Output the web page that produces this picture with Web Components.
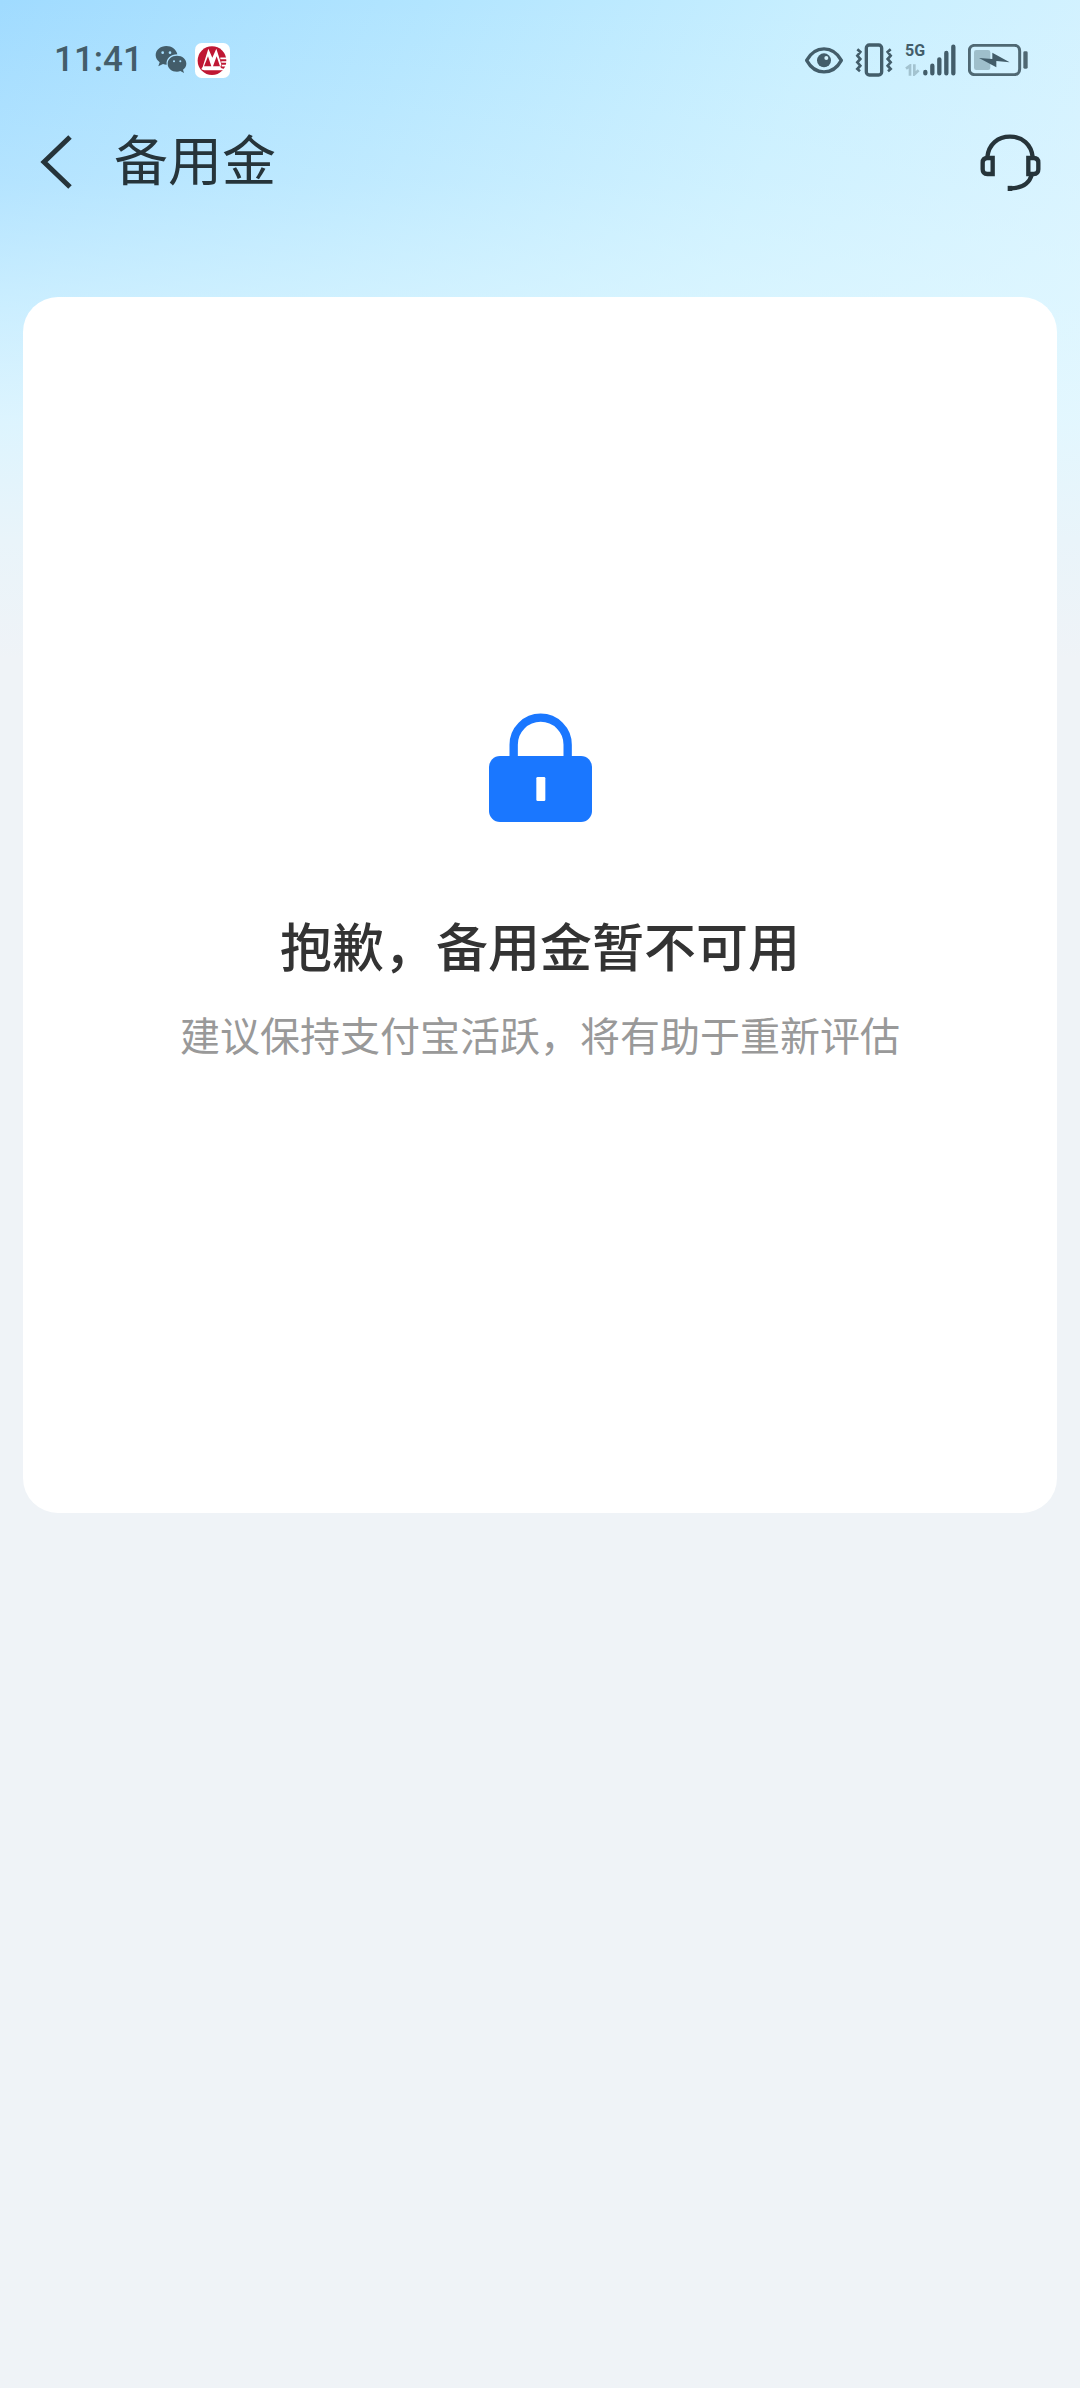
<!DOCTYPE html>
<html lang="zh-CN">
<head>
<meta charset="utf-8">
<meta name="viewport" content="width=device-width, initial-scale=1">
<title>备用金</title>
<style>
  html { background: #eff3f7; }
  body { margin: 0; font-family: "Noto Sans CJK SC", "Noto Sans", sans-serif; color: #333; }
</style>
</head>
<body>
<reserve-page>
  <status-bar slot="top" time="11:41"></status-bar>
  <nav-bar slot="top">备用金</nav-bar>
  <status-card>
    <lock-icon slot="icon"></lock-icon>
    <span slot="title">抱歉，备用金暂不可用</span>
    <span slot="text">建议保持支付宝活跃，将有助于重新评估</span>
  </status-card>
</reserve-page>

<script>
function define(name, html) {
  const template = document.createElement('template');
  template.innerHTML = html;
  customElements.define(name, class extends HTMLElement {
    constructor() {
      super();
      this.attachShadow({ mode: 'open' }).append(template.content.cloneNode(true));
    }
    connectedCallback() {
      const time = this.shadowRoot.querySelector('time');
      if (time) time.textContent = this.getAttribute('time');
    }
  });
}

define('reserve-page', `
<style>
  :host {
    display: block; box-sizing: border-box; min-height: 100vh; padding-bottom: 48px;
    background:
      linear-gradient(180deg, rgba(230,248,255,0) 0, rgba(230,248,255,.25) 180px, rgba(226,248,255,.6) 300px, rgba(228,247,254,.88) 420px, rgba(233,244,250,1) 540px, #eff3f7 660px) no-repeat,
      linear-gradient(112deg, #a0dbff 0%, #b2e5ff 32%, #c8efff 62%, #dcf4ff 100%) 0 0 / 100% 640px no-repeat,
      #eff3f7;
  }
  main { padding: 93px 23px 0; }
</style>
<header><slot name="top"></slot></header>
<main><slot></slot></main>`);

define('status-bar', `
<style>
  :host { display: flex; align-items: center; justify-content: space-between; height: 120px; padding: 0 52px 0 54px; color: #435d6a; }
  div { display: flex; align-items: center; }
  svg { display: block; }
  time { font: 500 35px/40px Roboto, sans-serif; margin-right: 12px; }
  .left svg + svg { margin-left: 8px; }
  .right { gap: 12px; }
  .net { align-items: stretch; }
  .kind { flex-direction: column; align-items: flex-start; justify-content: space-between; width: 18px; height: 32px; }
  .kind span { font: 700 16px/14px Roboto, sans-serif; }
</style>
<div class="left">
  <time></time>
  <svg width="32" height="30" viewBox="0 0 96 90" fill="currentColor" aria-label="微信">
    <path d="M34 3C16 3 2 15 2 31c0 9 5 16 12 21l-4 12 14-7c4 1 7 2 11 2-3-17 12-31 32-31C64 13 50 3 34 3z"/>
    <path d="M66 32c-16 0-28 10-28 24s12 24 28 24c4 0 7-1 10-2l11 6-3-10c6-4 10-11 10-18 0-14-12-24-28-24z"/>
    <g fill="#a8e0ff"><circle cx="23" cy="23" r="4"/><circle cx="45" cy="23" r="4"/><circle cx="57" cy="49" r="3"/><circle cx="76" cy="49" r="3"/></g>
  </svg>
  <svg width="35" height="35" viewBox="0 0 105 105" aria-label="招商银行">
    <rect width="105" height="105" rx="20" fill="#fff"/>
    <circle cx="51" cy="53" r="43" fill="#bf1733"/>
    <path d="M23 72L40 17l12 27 12-27 15 47-3 8q4 7 15 4l2 6H28q-14-2-5-10z" fill="#fff"/>
    <path d="M27 70l12-30 10 30zM54 70l11-30 10 30z" fill="#bf1733"/>
    <path d="M76 46h27M79 57h24M80 68h19" stroke="#fff" stroke-width="5"/>
  </svg>
</div>
<div class="right">
  <svg width="38" height="27" viewBox="0 0 114 81" aria-label="护眼模式">
    <path d="M5 40C30-6 84-6 109 40 84 86 30 86 5 40z" fill="none" stroke="currentColor" stroke-width="10" stroke-linejoin="round"/>
    <circle cx="57" cy="40" r="21" fill="currentColor"/><circle cx="64" cy="33" r="6" fill="#d3f1fb"/>
  </svg>
  <svg width="38" height="34" viewBox="0 0 114 102" fill="none" stroke="currentColor" stroke-width="10" aria-label="振动">
    <rect x="34" y="6" width="46" height="90" rx="9"/>
    <path d="M7 19l9 8-9 11 9 10-9 10 9 10-9 10 8 7M107 19l-9 8 9 11-9 10 9 10-9 10 9 10-8 7" stroke-width="8"/>
  </svg>
  <div class="net">
    <div class="kind"><span>5G</span>
      <svg width="16" height="12" viewBox="0 0 48 36" fill="none" stroke="#a3c3d0" stroke-width="8"><path d="M3 14L15 5v30M28 1v30l13-12"/></svg>
    </div>
    <svg width="33" height="32" viewBox="0 0 99 96" stroke="currentColor" stroke-width="13" stroke-linecap="round" aria-label="信号">
      <path d="M7 84v4M28 65v23M49 46v42M70 27v61M91 8v80"/>
    </svg>
  </div>
  <svg width="60" height="32" viewBox="0 0 180 96" aria-label="正在充电">
    <rect x="4" y="4" width="151" height="88" rx="16" fill="none" stroke="#4f6873" stroke-width="9"/>
    <rect x="18" y="18" width="49" height="60" rx="7" fill="#9fbfcb"/>
    <path d="M33 42l40 3V26l52 29-40-4v19z" fill="currentColor"/>
    <rect x="166" y="22" width="13" height="52" rx="4" fill="#4f6873"/>
  </svg>
</div>`);

define('nav-bar', `
<style>
  :host { display: flex; align-items: center; height: 84px; padding: 0 38px; color: #26343a; }
  button { display: block; border: 0; padding: 0; background: none; color: inherit; }
  svg { display: block; }
  h1 { flex: 1; margin: 0 0 8px 42px; font-size: 54px; line-height: 76px; font-weight: 400; }
</style>
<button type="button" aria-label="返回">
  <svg width="34" height="54" viewBox="0 0 34 54" fill="none" stroke="currentColor" stroke-width="5"><path d="M32 2L6 27l26 25"/></svg>
</button>
<h1><slot></slot></h1>
<button type="button" aria-label="客服">
  <svg width="62" height="58" viewBox="62 66 186 174" fill="none" stroke="currentColor" stroke-width="13">
    <path d="M84 138C88 100 115 77 152 77s64 23 68 61M217 192c-8 28-34 40-66 40" />
    <path d="M145 233h14" stroke-width="17"/>
    <path d="M100 141v48H84q-14 0-14-14v-20q0-14 14-14zM207 141v48h16q14 0 14-14v-20q0-14-14-14z"/>
  </svg>
</button>`);

define('status-card', `
<style>
  :host { display: flex; flex-direction: column; align-items: center; padding: 416px 24px 451px; border-radius: 35px; background: #fff; text-align: center; }
  h2 { margin: 87px 0 25px; font-size: 52px; line-height: 72px; font-weight: 500; color: #333; }
  p { margin: 0; font-size: 40px; line-height: 56px; color: #999; }
</style>
<slot name="icon"></slot>
<h2><slot name="title"></slot></h2>
<p><slot name="text"></slot></p>`);

define('lock-icon', `
<style>:host, svg { display: block; }</style>
<svg width="103" height="109" viewBox="0 0 309 327" aria-label="锁定">
  <path d="M74 140V95a81 81 0 0 1 162 0v45" fill="none" stroke="#1a77ff" stroke-width="25"/>
  <rect y="129" width="309" height="198" rx="33" fill="#1a77ff"/>
  <rect x="142" y="192" width="27" height="72" rx="4" fill="#fff"/>
</svg>`);
</script>
</body>
</html>
